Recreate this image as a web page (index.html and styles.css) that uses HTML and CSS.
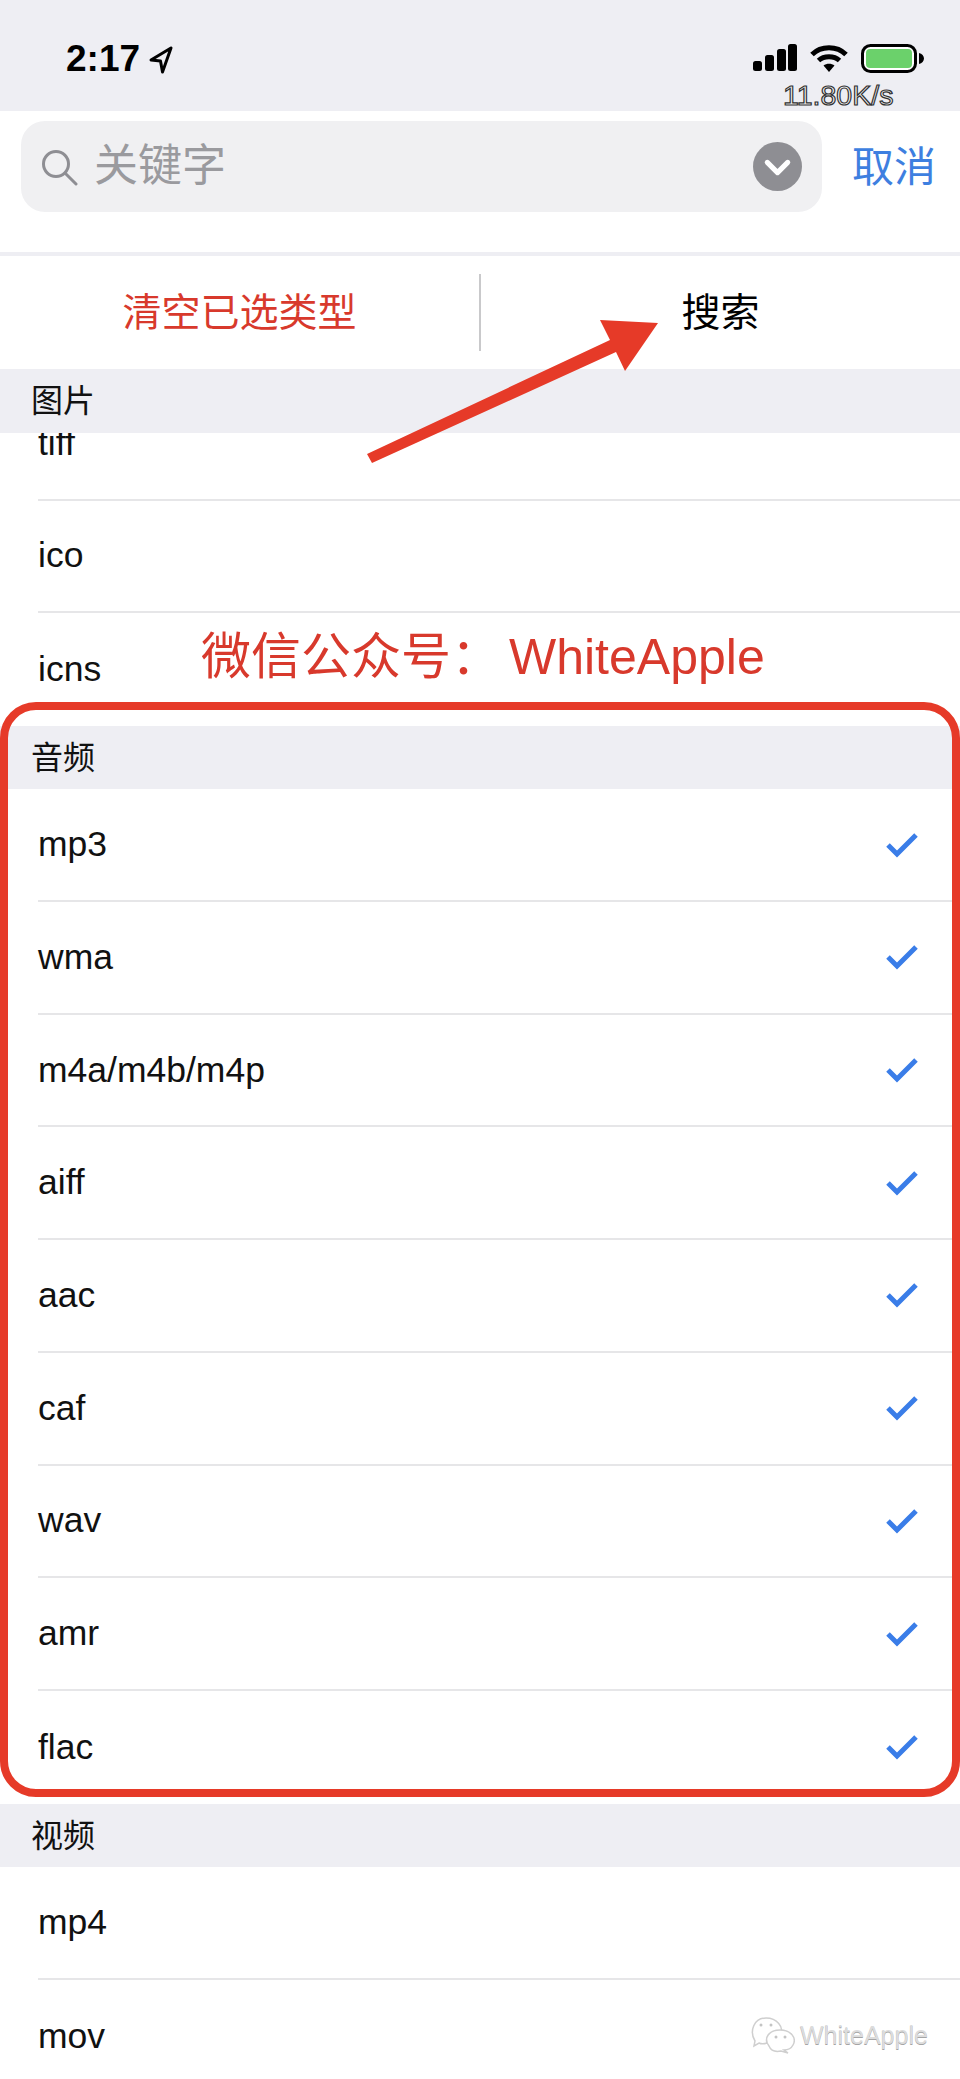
FILE: index.html
```html
<!DOCTYPE html>
<html lang="zh">
<head>
<meta charset="utf-8">
<title>搜索</title>
<link rel="stylesheet" href="styles.css">
</head>
<body>
<div class="page">
  <header class="status">
    <div class="status-left">
      <span class="time">2:17</span>
      <svg class="loc" width="26" height="28" viewBox="0 0 26 28"><path d="M23 2 3 14l9.500 1L14.500 26z" fill="none" stroke="#000" stroke-width="3" stroke-linejoin="round"/></svg>
    </div>
    <div class="status-right">
      <div class="status-icons">
        <svg width="44" height="27" viewBox="0 0 44 27"><g fill="#000"><rect x="0" y="17" width="9" height="10" rx="2.500"/><rect x="12" y="11" width="9" height="16" rx="2.500"/><rect x="24" y="5" width="9" height="22" rx="2.500"/><rect x="35" y="0" width="9" height="27" rx="2.500"/></g></svg>
        <svg width="38" height="28" viewBox="0 0 38 28"><g fill="none" stroke="#000" stroke-width="5"><path d="M2 10.500C11 1.500 27 1.500 36 10.500"/><path d="M8.500 16.500C14 11.500 24 11.500 29.500 16.500"/></g><path d="M13.500 21.500C16.500 19 21.500 19 24.500 21.500L19 28z" fill="#000"/></svg>
        <svg width="63" height="29" viewBox="0 0 63 29"><rect x="1.500" y="1.500" width="53" height="26" rx="8" fill="#fff" stroke="#000" stroke-width="3"/><rect x="5" y="5" width="46" height="19" rx="4" fill="#6bd16b"/><path d="M58 9c3 .5 5 3 5 5.500S61 19.500 58 20z" fill="#000"/></svg>
      </div>
      <div class="speed">11.80K/s</div>
    </div>
  </header>

  <section class="search">
    <div class="search-box">
      <svg class="search-icon" width="38" height="38" viewBox="0 0 38 38"><g fill="none" stroke="#8e8e93" stroke-width="3" stroke-linecap="round"><circle cx="16" cy="16" r="12.500"/><path d="M25.500 25.500 36 36"/></g></svg>
      <span class="placeholder">关键字</span>
      <svg class="chevron" width="49" height="49" viewBox="0 0 48 48"><circle cx="24" cy="24" r="24" fill="#8e8e93"/><path d="M14 20l10 10 10-10" fill="none" stroke="#fff" stroke-width="5" stroke-linecap="round" stroke-linejoin="round"/></svg>
    </div>
    <span class="cancel">取消</span>
  </section>

  <section class="actions">
    <div class="action action-clear">清空已选类型</div>
    <div class="action-divider"></div>
    <div class="action">搜索</div>
  </section>

  <main class="list">
    <h2 class="section-head">图片</h2>
    <div class="clip"><div class="row">tiff</div></div>
    <div class="row">ico</div>
    <div class="row row-last">icns</div>

    <h2 class="section-head">音频</h2>
    <div class="row">mp3<svg class="check" width="34" height="26" viewBox="0 0 34 26"><path d="M3 13l9 9L31 3" fill="none" stroke="#3a7de8" stroke-width="5"/></svg></div>
    <div class="row">wma<svg class="check" width="34" height="26" viewBox="0 0 34 26"><path d="M3 13l9 9L31 3" fill="none" stroke="#3a7de8" stroke-width="5"/></svg></div>
    <div class="row">m4a/m4b/m4p<svg class="check" width="34" height="26" viewBox="0 0 34 26"><path d="M3 13l9 9L31 3" fill="none" stroke="#3a7de8" stroke-width="5"/></svg></div>
    <div class="row">aiff<svg class="check" width="34" height="26" viewBox="0 0 34 26"><path d="M3 13l9 9L31 3" fill="none" stroke="#3a7de8" stroke-width="5"/></svg></div>
    <div class="row">aac<svg class="check" width="34" height="26" viewBox="0 0 34 26"><path d="M3 13l9 9L31 3" fill="none" stroke="#3a7de8" stroke-width="5"/></svg></div>
    <div class="row">caf<svg class="check" width="34" height="26" viewBox="0 0 34 26"><path d="M3 13l9 9L31 3" fill="none" stroke="#3a7de8" stroke-width="5"/></svg></div>
    <div class="row">wav<svg class="check" width="34" height="26" viewBox="0 0 34 26"><path d="M3 13l9 9L31 3" fill="none" stroke="#3a7de8" stroke-width="5"/></svg></div>
    <div class="row">amr<svg class="check" width="34" height="26" viewBox="0 0 34 26"><path d="M3 13l9 9L31 3" fill="none" stroke="#3a7de8" stroke-width="5"/></svg></div>
    <div class="row row-last">flac<svg class="check" width="34" height="26" viewBox="0 0 34 26"><path d="M3 13l9 9L31 3" fill="none" stroke="#3a7de8" stroke-width="5"/></svg></div>

    <h2 class="section-head">视频</h2>
    <div class="row">mp4</div>
    <div class="row row-last">mov</div>
  </main>

  <svg class="arrow" width="960" height="500" viewBox="0 0 960 500"><path d="M367 454 610 340 600 320 658 323 625 371 616 352 372 463z" fill="#e63a28"/></svg>
  <div class="note">微信公众号：<span class="note-latin">WhiteApple</span></div>
  <div class="frame"></div>
  <div class="watermark">
    <svg width="44" height="38" viewBox="0 0 44 38"><g fill="#fff" stroke="#cfcfcf" stroke-width="1.500"><path d="M4 25C-2 15 3 2 15 2s17 10 15 14C20 14 14 22 16 27 13 28 10 28 8 27l-5 3z"/><path d="M18 30c-6-8 0-16 11-16s17 8 13 15c-2 4-6 5-9 5l4 3-7-2c-5 1-10 0-12-5z"/></g><g fill="#c4c4c4"><circle cx="10" cy="9" r="1.500"/><circle cx="20" cy="9" r="1.500"/><circle cx="25" cy="21" r="1.500"/><circle cx="34" cy="21" r="1.500"/></g></svg>
    <span>WhiteApple</span>
  </div>
</div>
</body>
</html>
```
FILE: styles.css
```css
* { box-sizing: border-box; }
html, body { margin: 0; padding: 0; background: #fff; }
body { font-family: "Liberation Sans", "Noto Sans CJK SC", sans-serif; color: #111; }
.page { position: relative; width: 960px; height: 2079px; overflow: hidden; }

.status { height: 111px; background: #eeeef3; display: flex; justify-content: space-between; padding: 44px 36px 0 66px; }
.status-left { display: flex; align-items: flex-start; gap: 8px; }
.time { font-size: 37px; font-weight: 700; line-height: 30px; color: #000; }
.loc { margin-top: 2px; }
.status-right { display: flex; flex-direction: column; align-items: flex-start; }
.status-icons { display: flex; align-items: flex-start; gap: 13px; height: 37px; }
.speed { font-size: 28.500px; line-height: 28px; color: #f4f4f4; -webkit-text-stroke: 1.200px #333; margin-left: 30px; white-space: nowrap; }

.search { height: 145px; border-bottom: 4px solid #eeeef3; display: flex; align-items: flex-start; padding: 10px 0 0 21px; }
.search-box { width: 801px; height: 91px; background: #f0f0f2; border-radius: 24px; display: flex; align-items: center; padding: 0 20px 0 19px; }
.search-icon { flex: none; }
.placeholder { font-size: 44px; line-height: 44px; color: #9a9a9e; margin-left: 16px; margin-bottom: 2px; flex: 1; }
.chevron { flex: none; }
.cancel { font-size: 42px; color: #3e7fe0; margin-left: 30px; line-height: 93px; }

.actions { height: 113px; display: flex; align-items: center; }
.action { flex: 1; text-align: center; font-size: 39px; line-height: 44px; color: #000; }
.action-clear { color: #d8392c; }
.action-divider { width: 2px; height: 77px; background: #c9c9cb; }

.section-head { margin: 0; height: 63.500px; background: #eeeef3; padding-left: 31px; font-size: 32px; font-weight: 400; line-height: 65px; color: #111; }
.clip { height: 68px; display: flex; flex-direction: column; justify-content: flex-end; overflow: hidden; }
.clip .row { flex: none; }
.row { height: 112.700px; margin-left: 38px; border-bottom: 2px solid #e6e6e8; display: flex; align-items: center; justify-content: space-between; padding-right: 41px; font-size: 35.500px; color: #111; }
.row-last { border-bottom: none; }
.check { flex: none; }

.arrow { position: absolute; left: 0; top: 0; }
.note { position: absolute; left: 201px; top: 622px; font-size: 50px; line-height: 70px; color: #d8392c; white-space: nowrap; }
.note-latin { margin-left: 8px; }
.frame { position: absolute; left: 0; top: 702px; width: 960px; height: 1095px; border: 8px solid #e63a28; border-radius: 36px; }
.watermark { position: absolute; left: 751px; top: 2016px; display: flex; align-items: center; gap: 5px; font-size: 25px; color: #dcdcdc; text-shadow: 0 1px 0 #a5a5a5; }
```
